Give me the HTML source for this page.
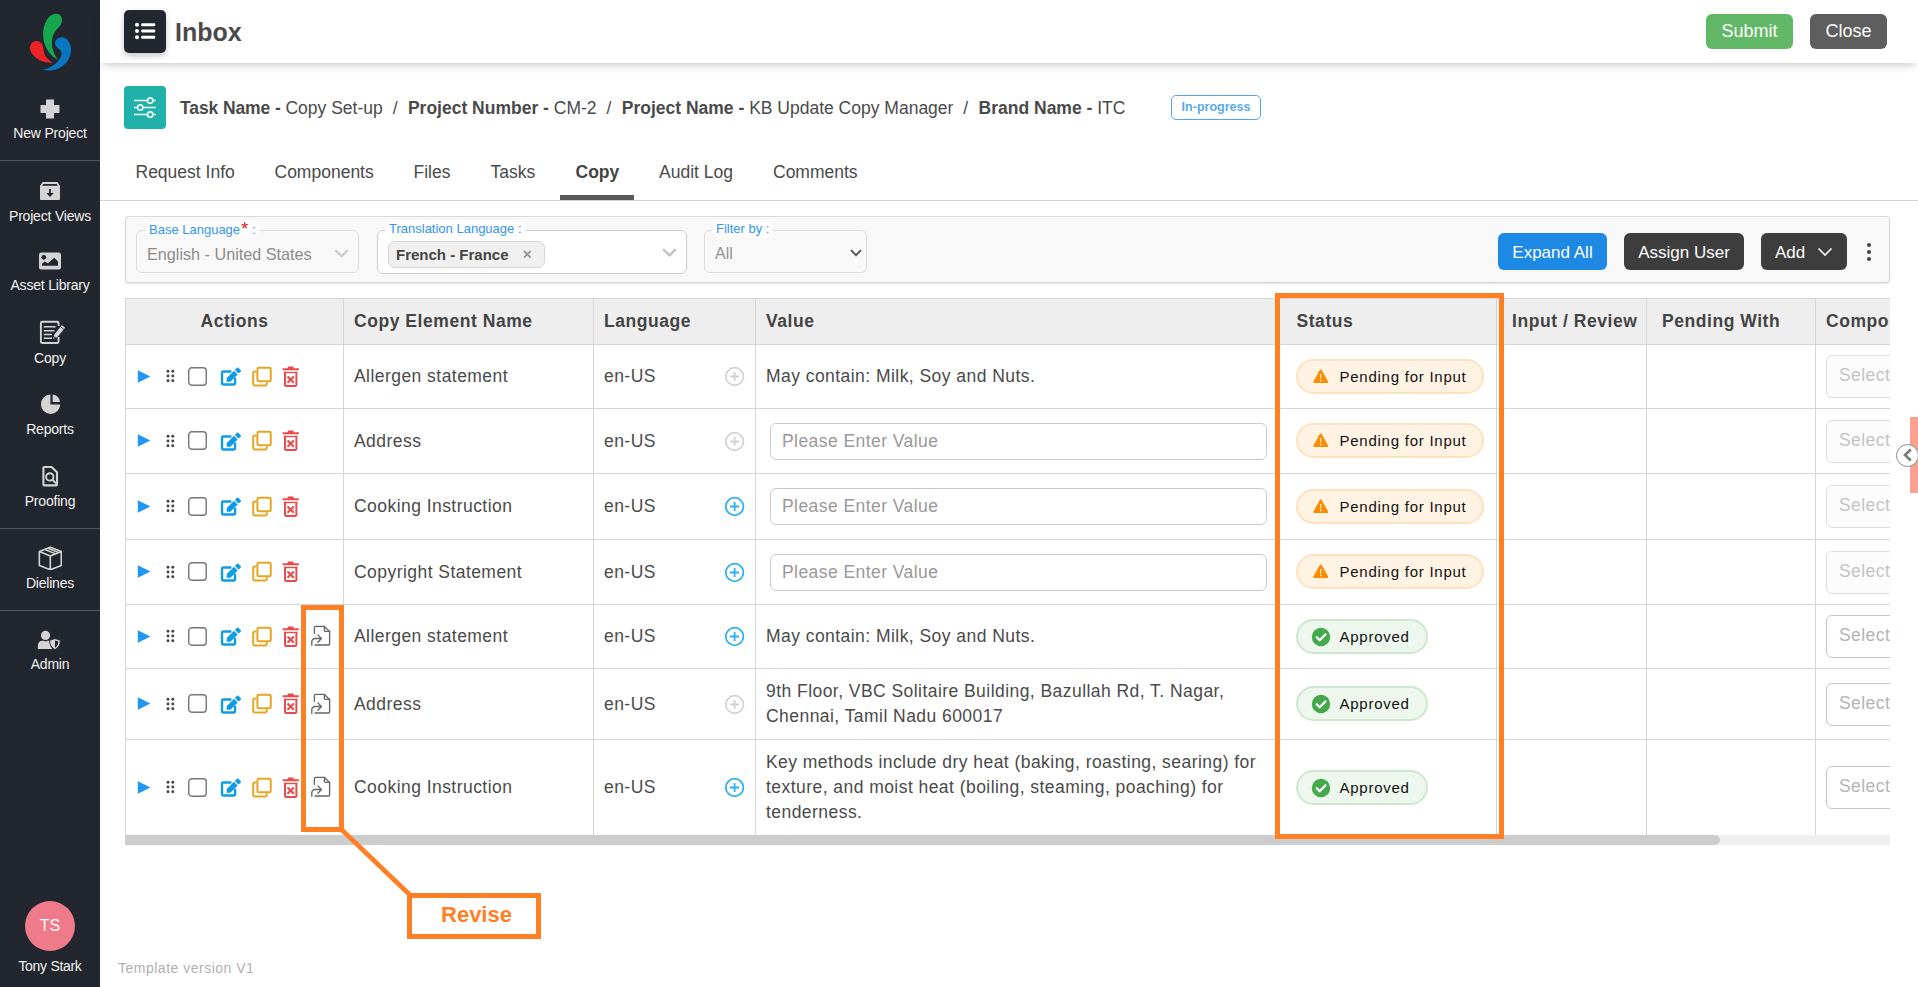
<!DOCTYPE html>
<html lang="en">
<head>
<meta charset="utf-8">
<title>Inbox</title>
<style>
*{box-sizing:border-box;margin:0;padding:0}
html,body{width:1918px;height:987px;overflow:hidden;background:#fff}
body{font-family:"Liberation Sans",Arial,sans-serif;color:#4a4a4a;position:relative;font-size:14px}
.abs{position:absolute}
/* sidebar */
#side{position:absolute;left:0;top:0;width:100px;height:987px;background:#22262e;color:#f1f1f1}
.sitem{position:absolute;left:0;width:100px;text-align:center;font-size:14px;line-height:16px;color:#f2f2f2;letter-spacing:-0.2px}
.sdiv{position:absolute;left:0;width:100px;height:1px;background:#555a62}
.sico{position:absolute;left:0;width:100px;display:flex;justify-content:center}
/* header */
#hdr{position:absolute;left:100px;top:0;width:1818px;height:63px;background:#fff;box-shadow:0 5px 8px -3px rgba(0,0,0,.22)}
.btn{position:absolute;color:#fff;border-radius:6px;text-align:center;font-size:18px}
/* tabs */
.tab{position:absolute;top:161px;font-size:17.5px;line-height:22px;color:#4a4a4a;white-space:nowrap}
.sl{margin:0 10.4px 0 9.9px}
.flabel{position:absolute;font-size:13px;line-height:18px;height:18px;color:#3596ee;background:#fdfdfd;border-radius:9px;padding:0 4px;white-space:nowrap}
.th{letter-spacing:.55px;position:absolute;top:309.5px;font-weight:bold;font-size:17.5px;line-height:22px;color:#444;white-space:nowrap}
.td{letter-spacing:.45px;position:absolute;font-size:17.5px;line-height:25px;color:#4a4a4a;white-space:nowrap}
.inp{letter-spacing:.44px;width:497px;height:37px;border:1px solid #cacaca;border-radius:6px;background:#fff;color:#999;font-size:17.5px;line-height:34px;padding-left:11px}
.pill{position:absolute;height:35px;border-radius:18px;font-size:15px;letter-spacing:.75px;color:#111;white-space:nowrap}
.pill span{position:absolute;top:0;line-height:32px}
.pp{width:188px;background:#fff3e3;border:2px solid #ffe2bd}
.pa{width:132px;background:#edf7ee;border:2px solid #cde8cf}
</style>
</head>
<body>
<div id="side">
<svg class="abs" style="left:20px;top:5px" width="60" height="75" viewBox="0 0 60 75">
<path fill="#17a84f" d="M35.7 8.7C40 8.5 42.5 12 42 16C41.5 20 38 23 35.5 26C32 31 31 38 33 45C34.5 50 36.5 53 38 54.7C34 53 28 48 25 40C22 32 22.5 22 27 14.5C29.5 10.5 32.5 8.8 35.7 8.7Z"/>
<path fill="#ee2328" d="M16.5 36C21 36 23.5 40 23.6 45C23.7 50 27 54.5 33 57.5C27 58.5 19 56 14.5 51.5C10.5 47.5 9 43 10.5 40C11.7 37.5 14 36 16.5 36Z"/>
<path fill="#0877c0" d="M41.5 32.3C47 32 51 38 51 45C51 53 46 60 38.5 63.6C33 66 27 66 22.8 64.8C29 63.5 35 60 39 55C42 51 42.5 47.5 40 45C37 42.5 34.5 40.5 35 37.5C35.5 34.5 38 32.5 41.5 32.3Z"/>
</svg>
<!-- New Project -->
<svg class="abs" style="left:40px;top:99px" width="20" height="20" viewBox="0 0 20 20"><path fill="#d4d4d4" d="M6.5 0.5h7a.5.5 0 0 1 .5.5v5h5a.5.5 0 0 1 .5.5v7a.5.5 0 0 1-.5.5h-5v5a.5.5 0 0 1-.5.5h-7a.5.5 0 0 1-.5-.5v-5h-5a.5.5 0 0 1-.5-.5v-7a.5.5 0 0 1 .5-.5h5v-5a.5.5 0 0 1 .5-.5z"/></svg>
<div class="sitem" style="top:125px">New Project</div>
<div class="sdiv" style="top:160px"></div>
<!-- Project Views -->
<svg class="abs" style="left:40px;top:182px" width="20" height="18" viewBox="0 0 20 18"><path fill="#d4d4d4" d="M2.6 0h14.8l2.6 4v13a1 1 0 0 1-1 1H1a1 1 0 0 1-1-1V4z"/><path fill="#22262e" d="M3.2 2.1h13.6l.9 1.6H2.3z"/><path fill="#22262e" d="M9.1 7.1h1.8v4h2.9L10 14.9 6.2 11.1h2.9z"/></svg>
<div class="sitem" style="top:208px">Project Views</div>
<!-- Asset Library -->
<svg class="abs" style="left:39px;top:252px" width="22" height="18" viewBox="0 0 22 18"><rect x="0" y="0.6" width="22" height="16.8" rx="2.2" fill="#d4d4d4"/><circle cx="4.8" cy="5.3" r="2.4" fill="#22262e"/><path fill="#22262e" d="M2.9 13.8v-1.7l2.7-2.7 3.4 1.8 6.3-5.5 3.7 3.7v4.4z"/></svg>
<div class="sitem" style="top:277px">Asset Library</div>
<!-- Copy -->
<svg class="abs" style="left:38px;top:319px" width="30" height="28" viewBox="0 0 30 28"><path fill="none" stroke="#d4d4d4" stroke-width="1.9" d="M20.6 7V4.2a1.4 1.4 0 0 0-1.4-1.4H4.3a1.4 1.4 0 0 0-1.4 1.4v18.4a1.4 1.4 0 0 0 1.4 1.4h14.9a1.4 1.4 0 0 0 1.4-1.4V18"/><path stroke="#d4d4d4" stroke-width="1.5" d="M5.8 7.7h11.8M5.8 11.7h10.6M5.8 15.4h8.2M5.8 19.3h8.2"/><path fill="#d4d4d4" d="M15.1 20.1l1.2-4.6 7.6-9.4 3.2 2.6-7.6 9.4z"/><path stroke="#22262e" stroke-width=".9" d="M22.6 7.7l3.2 2.6"/><path fill="#22262e" d="M16.2 17.3l1.7 1.4-1.9.8z"/></svg>
<div class="sitem" style="top:350px">Copy</div>
<!-- Reports -->
<svg class="abs" style="left:39.500px;top:393px" width="22" height="22" viewBox="0 0 22 22"><path fill="#d4d4d4" d="M10.4 1.5v10.1h9.9A9.7 9.7 0 1 1 10.4 1.5z"/><path fill="#d4d4d4" d="M12.7 1.6a8 8 0 0 1 7.4 7.5h-7.4z"/></svg>
<div class="sitem" style="top:421px">Reports</div>
<!-- Proofing -->
<svg class="abs" style="left:40px;top:464px" width="20" height="24" viewBox="0 0 20 24"><path fill="none" stroke="#d4d4d4" stroke-width="2.1" stroke-linejoin="round" d="M4.2 3h7.4l5.4 5.2v12.4a.8.8 0 0 1-.8.8H4.2a.8.8 0 0 1-.8-.8V3.8a.8.8 0 0 1 .8-.8z"/><circle cx="9.8" cy="12.9" r="3.7" fill="none" stroke="#d4d4d4" stroke-width="1.9"/><path stroke="#d4d4d4" stroke-width="2" d="M12.4 15.7l4.2 4.2"/></svg>
<div class="sitem" style="top:493px">Proofing</div>
<div class="sdiv" style="top:528px"></div>
<!-- Dielines -->
<svg class="abs" style="left:37.700px;top:545.600px" width="24.600" height="24.800" viewBox="0 0 26 26"><path fill="none" stroke="#d4d4d4" stroke-width="1.7" stroke-linejoin="round" d="M13 1.3l11.6 4.5v14.6L13 25 1.4 20.4V5.8zM1.4 5.8L13 10.5l11.6-4.7M13 10.5V25"/><path fill="none" stroke="#d4d4d4" stroke-width="1.5" d="M7.2 3.6l11.6 4.7M10.6 2.3l11.2 4.5"/></svg>
<div class="sitem" style="top:575px">Dielines</div>
<div class="sdiv" style="top:610px"></div>
<!-- Admin -->
<svg class="abs" style="left:36px;top:628px" width="26" height="24" viewBox="0 0 26 24"><circle cx="9.5" cy="7.4" r="4.6" fill="#d4d4d4"/><path fill="#d4d4d4" d="M1.9 21v-3.6c0-2.6 2-4.6 4.6-4.6h1.2l1.8.7 1.8-.7h1.6l1 1.2c0 3 .8 5 2.600 7z"/><path fill="#d4d4d4" stroke="#22262e" stroke-width=".9" d="M19 10.600l5.400 1.700c0 4.400-1.600 7.400-5.400 9.300-3.800-1.900-5.400-4.900-5.400-9.300z"/><path fill="#22262e" d="M19 12.600l3.300 1c-.1 2.900-1.100 4.800-3.300 6.100z"/></svg>
<div class="sitem" style="top:656px">Admin</div>
<!-- user -->
<div class="abs" style="left:25px;top:901px;width:50px;height:50px;border-radius:50%;background:#ef7a8a;color:#fff;text-align:center;font-size:16px;line-height:50px">TS</div>
<div class="sitem" style="top:958px;letter-spacing:-0.3px">Tony Stark</div>
</div>

<div id="hdr">
<div class="abs" style="left:24px;top:10px;width:42px;height:43px;border-radius:5px;background:#22262e;box-shadow:0 3px 6px rgba(0,0,0,.22)">
<svg class="abs" style="left:11px;top:13px;overflow:visible" width="20" height="16" viewBox="0 0 20 16"><g fill="#fff"><circle cx="2" cy="1.800" r="2"/><circle cx="2" cy="8" r="2"/><circle cx="2" cy="14.200" r="2"/><rect x="6.200" y=".3" width="14" height="3" rx="1"/><rect x="6.200" y="6.500" width="14" height="3" rx="1"/><rect x="6.200" y="12.700" width="14" height="3" rx="1"/></g></svg>
</div>
<div class="abs" style="left:75px;top:16.500px;font-size:25px;line-height:30px;font-weight:bold;color:#4a4a4a">Inbox</div>
<div class="btn" style="left:1606px;top:14px;width:87px;height:35px;line-height:34px;background:#62b867;border-radius:6px">Submit</div>
<div class="btn" style="left:1710px;top:14px;width:77px;height:35px;line-height:34px;background:#5e5e5e;border-radius:6px">Close</div>
</div>

<div id="main">
<!-- task icon -->
<div class="abs" style="left:124px;top:86px;width:42px;height:43px;border-radius:4px;background:#20b2aa">
<svg class="abs" style="left:9px;top:10.400px" width="24" height="23" viewBox="0 0 24 23"><g fill="none" stroke="#f2fbfa" stroke-width="1.650"><path d="M1 4.500h13.400M20 4.500h2.700M1 11.500h3.400M10 11.500h12.700M1 18.500h13.400M20 18.500h2.700"/><circle cx="17.200" cy="4.500" r="2.700"/><circle cx="7.200" cy="11.500" r="2.700"/><circle cx="17.200" cy="18.500" r="2.700"/></g></svg>
</div>
<div id="crumb" class="abs" style="left:180px;top:97px;font-size:17.5px;line-height:22px;white-space:nowrap;color:#4a4a4a"><b style="letter-spacing:-.1px">Task Name - </b><span>Copy Set-up</span><span class="sl">/</span><b>Project Number - </b><span>CM-2</span><span class="sl">/</span><b>Project Name - </b><span>KB Update Copy Manager</span><span class="sl">/</span><b>Brand Name - </b><span>ITC</span></div>
<div class="abs" style="left:1171px;top:95px;width:90px;height:25px;border:1px solid #55a8e8;border-radius:5px;color:#5aaae8;font-size:12.5px;font-weight:bold;text-align:center;line-height:22px">In-progress</div>
<!-- tabs -->
<div class="tab" style="left:135.5px">Request Info</div>
<div class="tab" style="left:274.5px">Components</div>
<div class="tab" style="left:413.5px">Files</div>
<div class="tab" style="left:490.5px">Tasks</div>
<div class="tab" style="left:575.5px;font-weight:bold;color:#444">Copy</div>
<div class="tab" style="left:659px">Audit Log</div>
<div class="tab" style="left:773px">Comments</div>
<div class="abs" style="left:100px;top:200px;width:1818px;height:1px;background:#d2d2d2"></div>
<div class="abs" style="left:560px;top:195px;width:74px;height:5px;background:#5a5a5a"></div>
<!-- filter panel -->
<div class="abs" style="left:125px;top:216px;width:1765px;height:67px;background:#f8f8f8;border:1px solid #d8d8d8;border-radius:4px;box-shadow:0 1px 2px rgba(0,0,0,.12)"></div>
<div class="abs" style="left:136px;top:230px;width:223px;height:43px;border:1px solid #dcdcdc;border-radius:6px"></div>
<div class="flabel" style="left:145px;top:221px">Base Language<span style="color:#d9232e;font-size:19px;line-height:10px;position:relative;top:1px;margin-left:1px">*</span> :</div>
<div class="abs" style="left:147px;top:244px;font-size:16.2px;line-height:20px;color:#8c8c8c">English - United States</div>
<svg class="abs" style="left:334px;top:248.500px" width="15" height="9" viewBox="0 0 15 9"><path fill="none" stroke="#cdcdcd" stroke-width="2.300" d="M1.200 1.200l6.300 6L13.800 1.200"/></svg>
<div class="abs" style="left:377px;top:230px;width:310px;height:44px;border:1px solid #cfcfcf;border-radius:6px;background:#fff"></div>
<div class="flabel" style="left:385px;top:220px">Translation Language :</div>
<div class="abs" style="left:388px;top:241px;width:157px;height:27px;border:1px solid #d6d6d6;border-radius:7px;background:#f0f0f0;font-size:15px;font-weight:bold;color:#444;line-height:25px;padding-left:7px">French - France</div>
<svg class="abs" style="left:523px;top:250px" width="9" height="9" viewBox="0 0 9 9"><path stroke="#9a9a9a" stroke-width="1.900" d="M1 1l6.600 6.600M7.600 1L1 7.600"/></svg>
<svg class="abs" style="left:662px;top:248px" width="15" height="9" viewBox="0 0 15 9"><path fill="none" stroke="#c2c2c2" stroke-width="2.400" d="M1.200 1.200l6.300 6.200L13.800 1.200"/></svg>
<div class="abs" style="left:704px;top:230px;width:163px;height:43px;border:1px solid #dcdcdc;border-radius:6px"></div>
<div class="flabel" style="left:712px;top:220px">Filter by :</div>
<div class="abs" style="left:715px;top:243.500px;font-size:16px;line-height:20px;color:#939393">All</div>
<svg class="abs" style="left:850px;top:248.500px" width="12" height="8" viewBox="0 0 12 8"><path fill="none" stroke="#555" stroke-width="1.900" d="M1 1.200l5 5 5-5"/></svg>
<div class="btn" style="left:1498px;top:233px;width:109px;height:37px;line-height:40px;background:#1e88e5;font-size:17px">Expand All</div>
<div class="btn" style="left:1624px;top:233px;width:120px;height:37px;line-height:40px;background:#3d3d3d;font-size:17px">Assign User</div>
<div class="btn" style="left:1761px;top:233px;width:86px;height:37px;line-height:40px;background:#3d3d3d;font-size:17px;text-align:left;padding-left:14px">Add</div>
<svg class="abs" style="left:1817px;top:247px" width="16" height="10" viewBox="0 0 16 10"><path fill="none" stroke="#fff" stroke-width="1.6" d="M1.500 1.500L8 8l6.500-6.500"/></svg>
<svg class="abs" style="left:1865px;top:242px" width="8" height="20" viewBox="0 0 8 20"><g fill="#444"><circle cx="4" cy="3" r="2"/><circle cx="4" cy="10" r="2"/><circle cx="4" cy="17" r="2"/></g></svg>

<!--GRIDSTART--><div id="grid" class="abs" style="left:0;top:0;width:1890px;height:987px;overflow:hidden;clip-path:inset(0 0 0 0)">
<div class="abs" style="left:125px;top:298px;width:1765px;height:47px;background:#eee"></div>
<div class="abs" style="left:125px;top:298px;width:1765px;height:1px;background:#d6d6d6"></div>
<div class="abs" style="left:125px;top:344px;width:1765px;height:1px;background:#d6d6d6"></div>
<div class="abs" style="left:125px;top:408px;width:1765px;height:1px;background:#d6d6d6"></div>
<div class="abs" style="left:125px;top:473px;width:1765px;height:1px;background:#d6d6d6"></div>
<div class="abs" style="left:125px;top:539px;width:1765px;height:1px;background:#d6d6d6"></div>
<div class="abs" style="left:125px;top:604px;width:1765px;height:1px;background:#d6d6d6"></div>
<div class="abs" style="left:125px;top:668px;width:1765px;height:1px;background:#d6d6d6"></div>
<div class="abs" style="left:125px;top:739px;width:1765px;height:1px;background:#d6d6d6"></div>
<div class="abs" style="left:125px;top:835px;width:1765px;height:1px;background:#d6d6d6"></div>
<div class="abs" style="left:125px;top:298px;width:1px;height:538px;background:#d6d6d6"></div>
<div class="abs" style="left:343px;top:298px;width:1px;height:538px;background:#d6d6d6"></div>
<div class="abs" style="left:593px;top:298px;width:1px;height:538px;background:#d6d6d6"></div>
<div class="abs" style="left:755px;top:298px;width:1px;height:538px;background:#d6d6d6"></div>
<div class="abs" style="left:1278px;top:298px;width:1px;height:538px;background:#d6d6d6"></div>
<div class="abs" style="left:1496px;top:298px;width:1px;height:538px;background:#d6d6d6"></div>
<div class="abs" style="left:1646px;top:298px;width:1px;height:538px;background:#d6d6d6"></div>
<div class="abs" style="left:1815px;top:298px;width:1px;height:538px;background:#d6d6d6"></div>
<div class="th" style="left:126px;width:217px;text-align:center">Actions</div>
<div class="th" style="left:354px;">Copy Element Name</div>
<div class="th" style="left:604px;">Language</div>
<div class="th" style="left:766px;">Value</div>
<div class="th" style="left:1296.5px;">Status</div>
<div class="th" style="left:1512px;">Input / Review</div>
<div class="th" style="left:1662px;">Pending With</div>
<div class="th" style="left:1826px;">Component</div>
<svg class="abs" style="left:137px;top:370px" width="14" height="13" viewBox="0 0 14 13"><path fill="#2196f3" d="M.8.2L13.400 6.500.8 12.800z"/></svg>
<svg class="abs" style="left:165px;top:369px" width="11" height="14" viewBox="0 0 11 14"><g fill="#444"><circle cx="3" cy="2.300" r="1.450"/><circle cx="7.800" cy="2.300" r="1.450"/><circle cx="3" cy="7" r="1.450"/><circle cx="7.800" cy="7" r="1.450"/><circle cx="3" cy="11.700" r="1.450"/><circle cx="7.800" cy="11.700" r="1.450"/></g></svg>
<svg class="abs" style="left:188px;top:367px" width="19" height="19" viewBox="0 0 19 19"><rect x=".75" y=".75" width="17.500" height="17.500" rx="3" fill="#fff" stroke="#767676" stroke-width="1.400"/></svg>
<svg class="abs" style="left:220px;top:367.0px" width="22" height="19" viewBox="0 0 22 19"><g><path fill="none" stroke="#0e9ce6" stroke-width="2.4" stroke-linejoin="round" d="M11.400 4.500H3.200A1.200 1.200 0 0 0 2 5.700v10.650a1.200 1.200 0 0 0 1.200 1.200h10.650a1.200 1.200 0 0 0 1.200-1.200V10.800"/><g transform="rotate(-45 6.800 14.700)" fill="#0e9ce6"><path d="M6.600 14.700l2.800-2.650h10.200v5.300H9.400z"/><rect x="20.800" y="12.050" width="4" height="5.300" rx=".9"/></g></g></svg>
<svg class="abs" style="left:251px;top:365.9px" width="22" height="21" viewBox="0 0 22 21"><g fill="none" stroke="#e6a623" stroke-width="2"><rect x="6.400" y="1.700" width="13.350" height="13.600" rx="1.400"/><path d="M5.400 5.500H3.800a1.600 1.600 0 0 0-1.600 1.600v10.700a1.600 1.600 0 0 0 1.600 1.600h10.400a1.600 1.600 0 0 0 1.600-1.600v-1.500"/></g></svg>
<svg class="abs" style="left:282px;top:365.5px" width="18" height="22" viewBox="0 0 18 22"><g><path fill="#e94b4b" d="M.6 2.300h16.200v1.900H.6zM5.400 2.300l.7-1.700h5.200l.7 1.700z"/><path fill="none" stroke="#e94b4b" stroke-width="2" d="M3 5.800v12.900a1.200 1.200 0 0 0 1.200 1.200h9a1.200 1.200 0 0 0 1.200-1.200V5.800"/><path fill="#e94b4b" d="M2 5.800h13.200v1.400H2z"/><path stroke="#e94b4b" stroke-width="2.100" d="M5.500 10.400l6.300 6.300M11.800 10.400l-6.300 6.300"/></g></svg>
<div class="td" style="left:354px;top:364.0px">Allergen statement</div>
<div class="td" style="left:604px;top:364.0px">en-US</div>
<svg class="abs" style="left:724px;top:366.0px" width="21" height="21" viewBox="0 0 21 21"><g fill="none" stroke="#d2d2d2" stroke-width="1.800"><circle cx="10.600" cy="10.500" r="8.800"/><path d="M6 10.500h9.200M10.600 5.900v9.200"/></g></svg>
<div class="td" style="left:766px;top:364.0px">May contain: Milk, Soy and Nuts.</div>
<div class="pill pp" style="left:1296px;top:359px"><svg class="abs" style="left:14.800px;top:8px" width="15.500" height="14.500" viewBox="0 0 16 15"><path fill="#fb8c00" d="M8 .6c.5 0 .9.250 1.150.700l6.300 11.400c.5.900-.1 1.900-1.150 1.900H1.700C.65 14.600.050 13.600.550 12.700L6.850 1.300C7.100.850 7.500.6 8 .6z"/><path fill="#fff" d="M7.350 5.200h1.300l-.2 5h-.9zM7.300 11.100h1.400v1.500H7.300z"/></svg><span style="left:41.500px">Pending for Input</span></div>
<div class="abs" style="left:1826px;top:355px;width:120px;height:43px;border:1px solid #dedede;border-radius:6px;background:#fcfcfc;color:#c4c4c4;font-size:17.500px;letter-spacing:.42px;line-height:39.500px;padding-left:12px">Select</div>
<svg class="abs" style="left:137px;top:434px" width="14" height="13" viewBox="0 0 14 13"><path fill="#2196f3" d="M.8.2L13.400 6.500.8 12.800z"/></svg>
<svg class="abs" style="left:165px;top:434px" width="11" height="14" viewBox="0 0 11 14"><g fill="#444"><circle cx="3" cy="2.300" r="1.450"/><circle cx="7.800" cy="2.300" r="1.450"/><circle cx="3" cy="7" r="1.450"/><circle cx="7.800" cy="7" r="1.450"/><circle cx="3" cy="11.700" r="1.450"/><circle cx="7.800" cy="11.700" r="1.450"/></g></svg>
<svg class="abs" style="left:188px;top:431px" width="19" height="19" viewBox="0 0 19 19"><rect x=".75" y=".75" width="17.500" height="17.500" rx="3" fill="#fff" stroke="#767676" stroke-width="1.400"/></svg>
<svg class="abs" style="left:220px;top:431.5px" width="22" height="19" viewBox="0 0 22 19"><g><path fill="none" stroke="#0e9ce6" stroke-width="2.4" stroke-linejoin="round" d="M11.400 4.500H3.200A1.200 1.200 0 0 0 2 5.700v10.650a1.200 1.200 0 0 0 1.200 1.200h10.650a1.200 1.200 0 0 0 1.200-1.200V10.800"/><g transform="rotate(-45 6.800 14.700)" fill="#0e9ce6"><path d="M6.600 14.700l2.800-2.650h10.200v5.300H9.400z"/><rect x="20.800" y="12.050" width="4" height="5.300" rx=".9"/></g></g></svg>
<svg class="abs" style="left:251px;top:430.4px" width="22" height="21" viewBox="0 0 22 21"><g fill="none" stroke="#e6a623" stroke-width="2"><rect x="6.400" y="1.700" width="13.350" height="13.600" rx="1.400"/><path d="M5.400 5.500H3.800a1.600 1.600 0 0 0-1.600 1.600v10.700a1.600 1.600 0 0 0 1.600 1.600h10.400a1.600 1.600 0 0 0 1.600-1.600v-1.500"/></g></svg>
<svg class="abs" style="left:282px;top:430.0px" width="18" height="22" viewBox="0 0 18 22"><g><path fill="#e94b4b" d="M.6 2.300h16.200v1.900H.6zM5.400 2.300l.7-1.700h5.200l.7 1.700z"/><path fill="none" stroke="#e94b4b" stroke-width="2" d="M3 5.800v12.900a1.200 1.200 0 0 0 1.200 1.200h9a1.200 1.200 0 0 0 1.200-1.200V5.800"/><path fill="#e94b4b" d="M2 5.800h13.200v1.400H2z"/><path stroke="#e94b4b" stroke-width="2.100" d="M5.500 10.400l6.300 6.300M11.800 10.400l-6.300 6.300"/></g></svg>
<div class="td" style="left:354px;top:428.5px">Address</div>
<div class="td" style="left:604px;top:428.5px">en-US</div>
<svg class="abs" style="left:724px;top:430.5px" width="21" height="21" viewBox="0 0 21 21"><g fill="none" stroke="#d2d2d2" stroke-width="1.800"><circle cx="10.600" cy="10.500" r="8.800"/><path d="M6 10.500h9.200M10.600 5.900v9.200"/></g></svg>
<div class="abs inp" style="left:770px;top:423px">Please Enter Value</div>
<div class="pill pp" style="left:1296px;top:423px"><svg class="abs" style="left:14.800px;top:8px" width="15.500" height="14.500" viewBox="0 0 16 15"><path fill="#fb8c00" d="M8 .6c.5 0 .9.250 1.150.700l6.300 11.400c.5.900-.1 1.900-1.150 1.900H1.700C.65 14.600.050 13.600.550 12.700L6.850 1.300C7.100.850 7.500.6 8 .6z"/><path fill="#fff" d="M7.350 5.200h1.300l-.2 5h-.9zM7.300 11.100h1.400v1.500H7.300z"/></svg><span style="left:41.500px">Pending for Input</span></div>
<div class="abs" style="left:1826px;top:420px;width:120px;height:43px;border:1px solid #dedede;border-radius:6px;background:#fcfcfc;color:#c4c4c4;font-size:17.500px;letter-spacing:.42px;line-height:39.500px;padding-left:12px">Select</div>
<svg class="abs" style="left:137px;top:500px" width="14" height="13" viewBox="0 0 14 13"><path fill="#2196f3" d="M.8.2L13.400 6.500.8 12.800z"/></svg>
<svg class="abs" style="left:165px;top:499px" width="11" height="14" viewBox="0 0 11 14"><g fill="#444"><circle cx="3" cy="2.300" r="1.450"/><circle cx="7.800" cy="2.300" r="1.450"/><circle cx="3" cy="7" r="1.450"/><circle cx="7.800" cy="7" r="1.450"/><circle cx="3" cy="11.700" r="1.450"/><circle cx="7.800" cy="11.700" r="1.450"/></g></svg>
<svg class="abs" style="left:188px;top:497px" width="19" height="19" viewBox="0 0 19 19"><rect x=".75" y=".75" width="17.500" height="17.500" rx="3" fill="#fff" stroke="#767676" stroke-width="1.400"/></svg>
<svg class="abs" style="left:220px;top:497.0px" width="22" height="19" viewBox="0 0 22 19"><g><path fill="none" stroke="#0e9ce6" stroke-width="2.4" stroke-linejoin="round" d="M11.400 4.500H3.200A1.200 1.200 0 0 0 2 5.700v10.650a1.200 1.200 0 0 0 1.200 1.200h10.650a1.200 1.200 0 0 0 1.200-1.200V10.800"/><g transform="rotate(-45 6.800 14.700)" fill="#0e9ce6"><path d="M6.600 14.700l2.800-2.650h10.200v5.300H9.400z"/><rect x="20.800" y="12.050" width="4" height="5.300" rx=".9"/></g></g></svg>
<svg class="abs" style="left:251px;top:495.9px" width="22" height="21" viewBox="0 0 22 21"><g fill="none" stroke="#e6a623" stroke-width="2"><rect x="6.400" y="1.700" width="13.350" height="13.600" rx="1.400"/><path d="M5.400 5.500H3.800a1.600 1.600 0 0 0-1.600 1.600v10.700a1.600 1.600 0 0 0 1.600 1.600h10.400a1.600 1.600 0 0 0 1.600-1.600v-1.500"/></g></svg>
<svg class="abs" style="left:282px;top:495.5px" width="18" height="22" viewBox="0 0 18 22"><g><path fill="#e94b4b" d="M.6 2.300h16.200v1.900H.6zM5.400 2.300l.7-1.700h5.200l.7 1.700z"/><path fill="none" stroke="#e94b4b" stroke-width="2" d="M3 5.800v12.900a1.200 1.200 0 0 0 1.200 1.200h9a1.200 1.200 0 0 0 1.200-1.200V5.800"/><path fill="#e94b4b" d="M2 5.800h13.200v1.400H2z"/><path stroke="#e94b4b" stroke-width="2.100" d="M5.500 10.400l6.300 6.300M11.800 10.400l-6.300 6.300"/></g></svg>
<div class="td" style="left:354px;top:494.0px">Cooking Instruction</div>
<div class="td" style="left:604px;top:494.0px">en-US</div>
<svg class="abs" style="left:724px;top:496.0px" width="21" height="21" viewBox="0 0 21 21"><g fill="none" stroke="#2bb0f0" stroke-width="1.800"><circle cx="10.600" cy="10.500" r="8.800"/><path d="M6 10.500h9.200M10.600 5.900v9.200"/></g></svg>
<div class="abs inp" style="left:770px;top:488px">Please Enter Value</div>
<div class="pill pp" style="left:1296px;top:489px"><svg class="abs" style="left:14.800px;top:8px" width="15.500" height="14.500" viewBox="0 0 16 15"><path fill="#fb8c00" d="M8 .6c.5 0 .9.250 1.150.700l6.300 11.400c.5.900-.1 1.900-1.150 1.900H1.700C.65 14.600.050 13.600.550 12.700L6.850 1.300C7.100.850 7.500.6 8 .6z"/><path fill="#fff" d="M7.350 5.200h1.300l-.2 5h-.9zM7.300 11.100h1.400v1.500H7.300z"/></svg><span style="left:41.500px">Pending for Input</span></div>
<div class="abs" style="left:1826px;top:485px;width:120px;height:43px;border:1px solid #dedede;border-radius:6px;background:#fcfcfc;color:#c4c4c4;font-size:17.500px;letter-spacing:.42px;line-height:39.500px;padding-left:12px">Select</div>
<svg class="abs" style="left:137px;top:565px" width="14" height="13" viewBox="0 0 14 13"><path fill="#2196f3" d="M.8.2L13.400 6.500.8 12.800z"/></svg>
<svg class="abs" style="left:165px;top:565px" width="11" height="14" viewBox="0 0 11 14"><g fill="#444"><circle cx="3" cy="2.300" r="1.450"/><circle cx="7.800" cy="2.300" r="1.450"/><circle cx="3" cy="7" r="1.450"/><circle cx="7.800" cy="7" r="1.450"/><circle cx="3" cy="11.700" r="1.450"/><circle cx="7.800" cy="11.700" r="1.450"/></g></svg>
<svg class="abs" style="left:188px;top:562px" width="19" height="19" viewBox="0 0 19 19"><rect x=".75" y=".75" width="17.500" height="17.500" rx="3" fill="#fff" stroke="#767676" stroke-width="1.400"/></svg>
<svg class="abs" style="left:220px;top:562.5px" width="22" height="19" viewBox="0 0 22 19"><g><path fill="none" stroke="#0e9ce6" stroke-width="2.4" stroke-linejoin="round" d="M11.400 4.500H3.200A1.200 1.200 0 0 0 2 5.700v10.650a1.200 1.200 0 0 0 1.200 1.200h10.650a1.200 1.200 0 0 0 1.200-1.200V10.800"/><g transform="rotate(-45 6.800 14.700)" fill="#0e9ce6"><path d="M6.600 14.700l2.800-2.650h10.200v5.300H9.400z"/><rect x="20.800" y="12.050" width="4" height="5.300" rx=".9"/></g></g></svg>
<svg class="abs" style="left:251px;top:561.4px" width="22" height="21" viewBox="0 0 22 21"><g fill="none" stroke="#e6a623" stroke-width="2"><rect x="6.400" y="1.700" width="13.350" height="13.600" rx="1.400"/><path d="M5.400 5.500H3.800a1.600 1.600 0 0 0-1.600 1.600v10.700a1.600 1.600 0 0 0 1.600 1.600h10.400a1.600 1.600 0 0 0 1.600-1.600v-1.500"/></g></svg>
<svg class="abs" style="left:282px;top:561.0px" width="18" height="22" viewBox="0 0 18 22"><g><path fill="#e94b4b" d="M.6 2.300h16.200v1.900H.6zM5.400 2.300l.7-1.700h5.200l.7 1.700z"/><path fill="none" stroke="#e94b4b" stroke-width="2" d="M3 5.800v12.900a1.200 1.200 0 0 0 1.200 1.200h9a1.200 1.200 0 0 0 1.200-1.200V5.800"/><path fill="#e94b4b" d="M2 5.800h13.200v1.400H2z"/><path stroke="#e94b4b" stroke-width="2.100" d="M5.500 10.400l6.300 6.300M11.800 10.400l-6.300 6.300"/></g></svg>
<div class="td" style="left:354px;top:559.5px">Copyright Statement</div>
<div class="td" style="left:604px;top:559.5px">en-US</div>
<svg class="abs" style="left:724px;top:561.5px" width="21" height="21" viewBox="0 0 21 21"><g fill="none" stroke="#2bb0f0" stroke-width="1.800"><circle cx="10.600" cy="10.500" r="8.800"/><path d="M6 10.500h9.200M10.600 5.900v9.200"/></g></svg>
<div class="abs inp" style="left:770px;top:554px">Please Enter Value</div>
<div class="pill pp" style="left:1296px;top:554px"><svg class="abs" style="left:14.800px;top:8px" width="15.500" height="14.500" viewBox="0 0 16 15"><path fill="#fb8c00" d="M8 .6c.5 0 .9.250 1.150.700l6.300 11.400c.5.900-.1 1.900-1.150 1.900H1.700C.65 14.600.050 13.600.550 12.700L6.850 1.300C7.100.850 7.500.6 8 .6z"/><path fill="#fff" d="M7.350 5.200h1.300l-.2 5h-.9zM7.300 11.100h1.400v1.500H7.300z"/></svg><span style="left:41.500px">Pending for Input</span></div>
<div class="abs" style="left:1826px;top:551px;width:120px;height:43px;border:1px solid #dedede;border-radius:6px;background:#fcfcfc;color:#c4c4c4;font-size:17.500px;letter-spacing:.42px;line-height:39.500px;padding-left:12px">Select</div>
<svg class="abs" style="left:137px;top:630px" width="14" height="13" viewBox="0 0 14 13"><path fill="#2196f3" d="M.8.2L13.400 6.500.8 12.800z"/></svg>
<svg class="abs" style="left:165px;top:629px" width="11" height="14" viewBox="0 0 11 14"><g fill="#444"><circle cx="3" cy="2.300" r="1.450"/><circle cx="7.800" cy="2.300" r="1.450"/><circle cx="3" cy="7" r="1.450"/><circle cx="7.800" cy="7" r="1.450"/><circle cx="3" cy="11.700" r="1.450"/><circle cx="7.800" cy="11.700" r="1.450"/></g></svg>
<svg class="abs" style="left:188px;top:627px" width="19" height="19" viewBox="0 0 19 19"><rect x=".75" y=".75" width="17.500" height="17.500" rx="3" fill="#fff" stroke="#767676" stroke-width="1.400"/></svg>
<svg class="abs" style="left:220px;top:627.0px" width="22" height="19" viewBox="0 0 22 19"><g><path fill="none" stroke="#0e9ce6" stroke-width="2.4" stroke-linejoin="round" d="M11.400 4.500H3.200A1.200 1.200 0 0 0 2 5.700v10.650a1.200 1.200 0 0 0 1.200 1.200h10.650a1.200 1.200 0 0 0 1.200-1.200V10.800"/><g transform="rotate(-45 6.800 14.700)" fill="#0e9ce6"><path d="M6.600 14.700l2.800-2.650h10.200v5.300H9.400z"/><rect x="20.800" y="12.050" width="4" height="5.300" rx=".9"/></g></g></svg>
<svg class="abs" style="left:251px;top:625.9px" width="22" height="21" viewBox="0 0 22 21"><g fill="none" stroke="#e6a623" stroke-width="2"><rect x="6.400" y="1.700" width="13.350" height="13.600" rx="1.400"/><path d="M5.400 5.500H3.800a1.600 1.600 0 0 0-1.600 1.600v10.700a1.600 1.600 0 0 0 1.600 1.600h10.400a1.600 1.600 0 0 0 1.600-1.600v-1.500"/></g></svg>
<svg class="abs" style="left:282px;top:625.5px" width="18" height="22" viewBox="0 0 18 22"><g><path fill="#e94b4b" d="M.6 2.300h16.200v1.900H.6zM5.400 2.300l.7-1.700h5.200l.7 1.700z"/><path fill="none" stroke="#e94b4b" stroke-width="2" d="M3 5.800v12.900a1.200 1.200 0 0 0 1.200 1.200h9a1.200 1.200 0 0 0 1.200-1.200V5.800"/><path fill="#e94b4b" d="M2 5.800h13.200v1.400H2z"/><path stroke="#e94b4b" stroke-width="2.100" d="M5.500 10.400l6.300 6.300M11.800 10.400l-6.300 6.300"/></g></svg>
<svg class="abs" style="left:310px;top:625.1px" width="22" height="22" viewBox="0 0 22 22"><g fill="none" stroke="#666" stroke-width="1.350" stroke-linecap="round" stroke-linejoin="round"><path d="M4.400 8.200V2.600a1.200 1.200 0 0 1 1.200-1.200h8.800l5.200 5v12.400a1.200 1.200 0 0 1-1.200 1.200H5"/><path d="M14.400 1.400v3.800a1.200 1.200 0 0 0 1.200 1.200h4"/><path d="M1.800 20.300v-3.600a3.200 3.200 0 0 1 3.200-3.200h6.200M7.900 9.900l3.500 3.600-3.500 3.700"/></g></svg>
<div class="td" style="left:354px;top:624.0px">Allergen statement</div>
<div class="td" style="left:604px;top:624.0px">en-US</div>
<svg class="abs" style="left:724px;top:626.0px" width="21" height="21" viewBox="0 0 21 21"><g fill="none" stroke="#2bb0f0" stroke-width="1.800"><circle cx="10.600" cy="10.500" r="8.800"/><path d="M6 10.500h9.200M10.600 5.900v9.200"/></g></svg>
<div class="td" style="left:766px;top:624.0px">May contain: Milk, Soy and Nuts.</div>
<div class="pill pa" style="left:1296px;top:619px"><svg class="abs" style="left:12.500px;top:5.500px" width="20" height="20" viewBox="0 0 20 20"><circle cx="10" cy="10" r="9.200" fill="#43a94a"/><path fill="none" stroke="#fff" stroke-width="2.300" stroke-linecap="round" stroke-linejoin="round" d="M5.700 10.300l3 3 5.700-5.900"/></svg><span style="left:41.500px">Approved</span></div>
<div class="abs" style="left:1826px;top:615px;width:120px;height:43px;border:1px solid #c6c6c6;border-radius:6px;background:#fff;color:#b4b4b4;font-size:17.500px;letter-spacing:.42px;line-height:39.500px;padding-left:12px">Select</div>
<svg class="abs" style="left:137px;top:697px" width="14" height="13" viewBox="0 0 14 13"><path fill="#2196f3" d="M.8.2L13.400 6.500.8 12.800z"/></svg>
<svg class="abs" style="left:165px;top:697px" width="11" height="14" viewBox="0 0 11 14"><g fill="#444"><circle cx="3" cy="2.300" r="1.450"/><circle cx="7.800" cy="2.300" r="1.450"/><circle cx="3" cy="7" r="1.450"/><circle cx="7.800" cy="7" r="1.450"/><circle cx="3" cy="11.700" r="1.450"/><circle cx="7.800" cy="11.700" r="1.450"/></g></svg>
<svg class="abs" style="left:188px;top:694px" width="19" height="19" viewBox="0 0 19 19"><rect x=".75" y=".75" width="17.500" height="17.500" rx="3" fill="#fff" stroke="#767676" stroke-width="1.400"/></svg>
<svg class="abs" style="left:220px;top:694.5px" width="22" height="19" viewBox="0 0 22 19"><g><path fill="none" stroke="#0e9ce6" stroke-width="2.4" stroke-linejoin="round" d="M11.400 4.500H3.200A1.200 1.200 0 0 0 2 5.700v10.650a1.200 1.200 0 0 0 1.200 1.200h10.650a1.200 1.200 0 0 0 1.200-1.200V10.800"/><g transform="rotate(-45 6.800 14.700)" fill="#0e9ce6"><path d="M6.600 14.700l2.800-2.650h10.200v5.300H9.400z"/><rect x="20.800" y="12.050" width="4" height="5.300" rx=".9"/></g></g></svg>
<svg class="abs" style="left:251px;top:693.4px" width="22" height="21" viewBox="0 0 22 21"><g fill="none" stroke="#e6a623" stroke-width="2"><rect x="6.400" y="1.700" width="13.350" height="13.600" rx="1.400"/><path d="M5.400 5.500H3.800a1.600 1.600 0 0 0-1.600 1.600v10.700a1.600 1.600 0 0 0 1.600 1.600h10.400a1.600 1.600 0 0 0 1.600-1.600v-1.500"/></g></svg>
<svg class="abs" style="left:282px;top:693.0px" width="18" height="22" viewBox="0 0 18 22"><g><path fill="#e94b4b" d="M.6 2.300h16.200v1.900H.6zM5.400 2.300l.7-1.700h5.200l.7 1.700z"/><path fill="none" stroke="#e94b4b" stroke-width="2" d="M3 5.800v12.900a1.200 1.200 0 0 0 1.200 1.200h9a1.200 1.200 0 0 0 1.200-1.200V5.800"/><path fill="#e94b4b" d="M2 5.800h13.200v1.400H2z"/><path stroke="#e94b4b" stroke-width="2.100" d="M5.500 10.400l6.300 6.300M11.800 10.400l-6.300 6.300"/></g></svg>
<svg class="abs" style="left:310px;top:692.6px" width="22" height="22" viewBox="0 0 22 22"><g fill="none" stroke="#666" stroke-width="1.350" stroke-linecap="round" stroke-linejoin="round"><path d="M4.400 8.200V2.600a1.200 1.200 0 0 1 1.200-1.200h8.800l5.200 5v12.400a1.200 1.200 0 0 1-1.200 1.200H5"/><path d="M14.400 1.400v3.800a1.200 1.200 0 0 0 1.200 1.200h4"/><path d="M1.800 20.300v-3.600a3.200 3.200 0 0 1 3.200-3.200h6.200M7.900 9.900l3.500 3.600-3.500 3.700"/></g></svg>
<div class="td" style="left:354px;top:691.5px">Address</div>
<div class="td" style="left:604px;top:691.5px">en-US</div>
<svg class="abs" style="left:724px;top:693.5px" width="21" height="21" viewBox="0 0 21 21"><g fill="none" stroke="#d2d2d2" stroke-width="1.800"><circle cx="10.600" cy="10.500" r="8.800"/><path d="M6 10.500h9.200M10.600 5.900v9.200"/></g></svg>
<div class="td" style="left:766px;top:679.0px">9th Floor, VBC Solitaire Building, Bazullah Rd, T. Nagar,<br>Chennai, Tamil Nadu 600017</div>
<div class="pill pa" style="left:1296px;top:686px"><svg class="abs" style="left:12.500px;top:5.500px" width="20" height="20" viewBox="0 0 20 20"><circle cx="10" cy="10" r="9.200" fill="#43a94a"/><path fill="none" stroke="#fff" stroke-width="2.300" stroke-linecap="round" stroke-linejoin="round" d="M5.700 10.300l3 3 5.700-5.900"/></svg><span style="left:41.500px">Approved</span></div>
<div class="abs" style="left:1826px;top:683px;width:120px;height:43px;border:1px solid #c6c6c6;border-radius:6px;background:#fff;color:#b4b4b4;font-size:17.500px;letter-spacing:.42px;line-height:39.500px;padding-left:12px">Select</div>
<svg class="abs" style="left:137px;top:781px" width="14" height="13" viewBox="0 0 14 13"><path fill="#2196f3" d="M.8.2L13.400 6.500.8 12.800z"/></svg>
<svg class="abs" style="left:165px;top:780px" width="11" height="14" viewBox="0 0 11 14"><g fill="#444"><circle cx="3" cy="2.300" r="1.450"/><circle cx="7.800" cy="2.300" r="1.450"/><circle cx="3" cy="7" r="1.450"/><circle cx="7.800" cy="7" r="1.450"/><circle cx="3" cy="11.700" r="1.450"/><circle cx="7.800" cy="11.700" r="1.450"/></g></svg>
<svg class="abs" style="left:188px;top:778px" width="19" height="19" viewBox="0 0 19 19"><rect x=".75" y=".75" width="17.500" height="17.500" rx="3" fill="#fff" stroke="#767676" stroke-width="1.400"/></svg>
<svg class="abs" style="left:220px;top:778.0px" width="22" height="19" viewBox="0 0 22 19"><g><path fill="none" stroke="#0e9ce6" stroke-width="2.4" stroke-linejoin="round" d="M11.400 4.500H3.200A1.200 1.200 0 0 0 2 5.700v10.650a1.200 1.200 0 0 0 1.200 1.200h10.650a1.200 1.200 0 0 0 1.200-1.200V10.800"/><g transform="rotate(-45 6.800 14.700)" fill="#0e9ce6"><path d="M6.600 14.700l2.800-2.650h10.200v5.300H9.400z"/><rect x="20.800" y="12.050" width="4" height="5.300" rx=".9"/></g></g></svg>
<svg class="abs" style="left:251px;top:776.9px" width="22" height="21" viewBox="0 0 22 21"><g fill="none" stroke="#e6a623" stroke-width="2"><rect x="6.400" y="1.700" width="13.350" height="13.600" rx="1.400"/><path d="M5.400 5.500H3.800a1.600 1.600 0 0 0-1.600 1.600v10.700a1.600 1.600 0 0 0 1.600 1.600h10.400a1.600 1.600 0 0 0 1.600-1.600v-1.500"/></g></svg>
<svg class="abs" style="left:282px;top:776.5px" width="18" height="22" viewBox="0 0 18 22"><g><path fill="#e94b4b" d="M.6 2.300h16.200v1.900H.6zM5.400 2.300l.7-1.700h5.200l.7 1.700z"/><path fill="none" stroke="#e94b4b" stroke-width="2" d="M3 5.800v12.900a1.200 1.200 0 0 0 1.200 1.200h9a1.200 1.200 0 0 0 1.200-1.200V5.800"/><path fill="#e94b4b" d="M2 5.800h13.200v1.400H2z"/><path stroke="#e94b4b" stroke-width="2.100" d="M5.500 10.400l6.300 6.300M11.800 10.400l-6.300 6.300"/></g></svg>
<svg class="abs" style="left:310px;top:776.1px" width="22" height="22" viewBox="0 0 22 22"><g fill="none" stroke="#666" stroke-width="1.350" stroke-linecap="round" stroke-linejoin="round"><path d="M4.400 8.200V2.600a1.200 1.200 0 0 1 1.200-1.200h8.800l5.200 5v12.400a1.200 1.200 0 0 1-1.200 1.200H5"/><path d="M14.400 1.400v3.800a1.200 1.200 0 0 0 1.200 1.200h4"/><path d="M1.800 20.300v-3.600a3.200 3.200 0 0 1 3.200-3.200h6.200M7.900 9.900l3.500 3.600-3.500 3.700"/></g></svg>
<div class="td" style="left:354px;top:775.0px">Cooking Instruction</div>
<div class="td" style="left:604px;top:775.0px">en-US</div>
<svg class="abs" style="left:724px;top:777.0px" width="21" height="21" viewBox="0 0 21 21"><g fill="none" stroke="#2bb0f0" stroke-width="1.800"><circle cx="10.600" cy="10.500" r="8.800"/><path d="M6 10.500h9.200M10.600 5.900v9.200"/></g></svg>
<div class="td" style="left:766px;top:750.0px">Key methods include dry heat (baking, roasting, searing) for<br>texture, and moist heat (boiling, steaming, poaching) for<br>tenderness.</div>
<div class="pill pa" style="left:1296px;top:770px"><svg class="abs" style="left:12.500px;top:5.500px" width="20" height="20" viewBox="0 0 20 20"><circle cx="10" cy="10" r="9.200" fill="#43a94a"/><path fill="none" stroke="#fff" stroke-width="2.300" stroke-linecap="round" stroke-linejoin="round" d="M5.700 10.300l3 3 5.700-5.900"/></svg><span style="left:41.500px">Approved</span></div>
<div class="abs" style="left:1826px;top:766px;width:120px;height:43px;border:1px solid #c6c6c6;border-radius:6px;background:#fff;color:#b4b4b4;font-size:17.500px;letter-spacing:.42px;line-height:39.500px;padding-left:12px">Select</div>
<div class="abs" style="left:125px;top:835px;width:1765px;height:10px;background:#f0f0f0"></div>
<div class="abs" style="left:125px;top:835px;width:1595px;height:10px;background:#cdcdcd;border-radius:0 5px 5px 0"></div>
</div><!--GRIDEND-->
<!-- annotations -->
<svg class="abs" style="left:0;top:0;pointer-events:none" width="1918" height="987" viewBox="0 0 1918 987"><g fill="none" stroke="#ff7f24" stroke-width="5"><rect x="1277.500" y="295.500" width="224" height="541"/><rect x="303.500" y="607.500" width="38" height="222"/><path d="M342 830L409.500 894.500" stroke-width="4.600"/><rect x="409.500" y="895.500" width="129" height="41" fill="#fff"/></g><text x="476.500" y="922.300" text-anchor="middle" font-family="'Liberation Sans',Arial,sans-serif" font-weight="bold" font-size="22" fill="#ff7f24">Revise</text></svg>
<!-- side handle -->
<div class="abs" style="left:1910px;top:417px;width:8px;height:76px;background:#fca08f"></div>
<div class="abs" style="left:1896px;top:443.500px;width:23px;height:23px;border:1px solid #8a8a8a;border-radius:50%;background:#fff"></div>
<svg class="abs" style="left:1901px;top:448px" width="14" height="14" viewBox="0 0 14 14"><path fill="none" stroke="#7a7a7a" stroke-width="2.600" d="M9.800 1.500L4 7l5.800 5.500"/></svg>
<!-- footer -->
<div class="abs" style="left:118px;top:960px;font-size:14px;line-height:16px;color:#b0b0b0;letter-spacing:.5px">Template version V1</div>
</div>

</body>
</html>
